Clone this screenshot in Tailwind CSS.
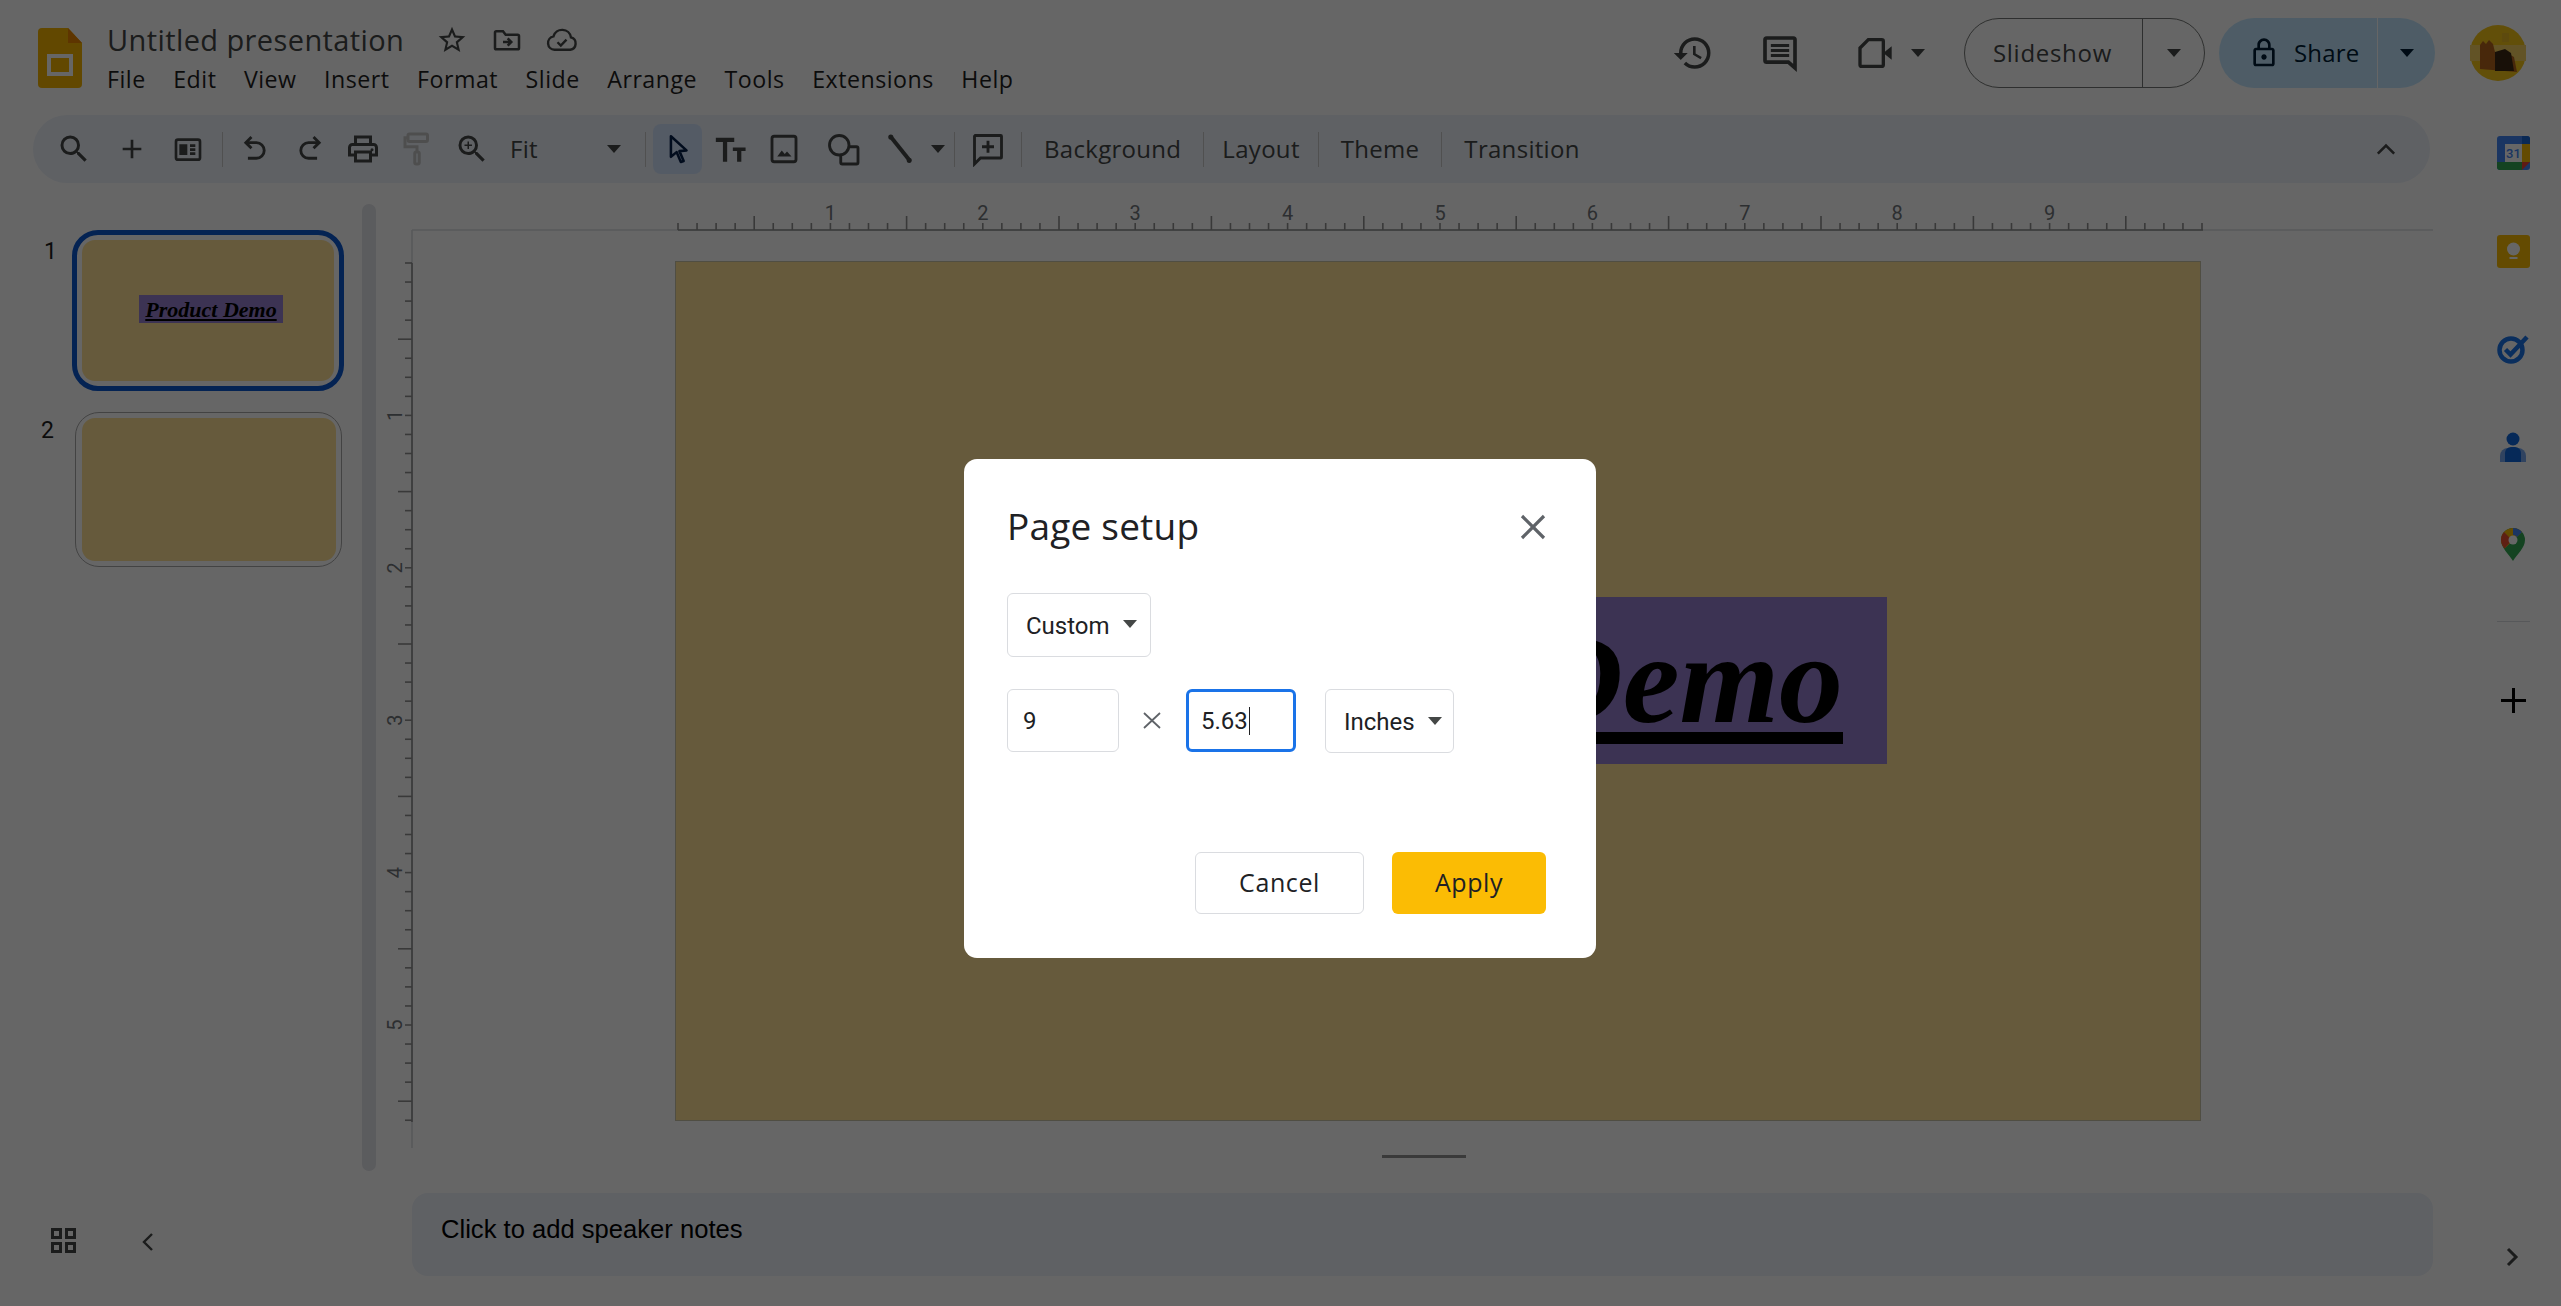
<!DOCTYPE html>
<html lang="en">
<head>
    <meta charset="UTF-8">
    <title>Untitled presentation - Page setup</title>
    <script src="https://cdn.jsdelivr.net/npm/@tailwindcss/browser@4"></script>
</head>
<body class="bg-white font-['Roboto',sans-serif]">
<div class="relative w-[2561px] h-[1306px] overflow-hidden flex flex-col bg-white">

    <!-- header -->
    <div class="h-[115px] flex items-start shrink-0">
        <svg class="ml-[38px] mt-[28px] w-[44px] h-[60px] shrink-0" viewBox="0 0 44 60">
            <path d="M4 0h26l14 15v41a4 4 0 0 1-4 4H4a4 4 0 0 1-4-4V4a4 4 0 0 1 4-4z" fill="#f4b400"/>
            <path d="M30 0l14 15H30z" fill="#ea8600"/>
            <path d="M9 26h26v22H9zM13 30v14h18V30z" fill="#fff" fill-rule="evenodd"/>
        </svg>
        <div class="ml-[25px] mt-[20px]">
            <div class="flex items-center h-[40px]">
                <span class="font-['Open_Sans',sans-serif] text-[29px] leading-[40px] text-[#444746] tracking-[0.4px] w-[329px]">Untitled presentation</span>
                <svg class="w-[32px] h-[32px]" viewBox="0 0 24 24" fill="#444746"><path d="M22 9.24l-7.19-.62L12 2 9.19 8.63 2 9.24l5.46 4.73L5.82 21 12 17.27 18.18 21l-1.63-7.03L22 9.24zM12 15.4l-3.76 2.27 1-4.28-3.32-2.88 4.38-.38L12 6.1l1.71 4.04 4.38.38-3.32 2.88 1 4.28L12 15.4z"/></svg>
                <svg class="ml-[23px] w-[32px] h-[32px]" viewBox="0 0 24 24" fill="none" stroke="#444746" stroke-width="1.9"><path d="M3 6.5a1 1 0 0 1 1-1h5l2 2.5h9a1 1 0 0 1 1 1V18a1 1 0 0 1-1 1H4a1 1 0 0 1-1-1z"/><path d="M9 13.5h6M12.5 10.8l2.7 2.7-2.7 2.7"/></svg>
                <svg class="ml-[21px] w-[36px] h-[36px]" viewBox="0 0 24 24" fill="none" stroke="#444746" stroke-width="1.6"><path d="M7 18.5a4.5 4.5 0 0 1-.7-8.9A6 6 0 0 1 18 10.3a4.2 4.2 0 0 1-.5 8.2z"/><path d="M9 13.5l2.2 2.2L15 11.8"/></svg>
            </div>
            <div class="flex gap-[27.5px] font-['Open_Sans',sans-serif] text-[23.2px] leading-[38px] text-[#1f1f1f] tracking-[0.5px]">
                <span>File</span><span>Edit</span><span>View</span><span>Insert</span><span>Format</span><span>Slide</span><span>Arrange</span><span>Tools</span><span>Extensions</span><span>Help</span>
            </div>
        </div>

        <div class="ml-auto mr-[35px] mt-[18px] flex items-center h-[70px]">
            <svg class="w-[42px] h-[42px]" viewBox="0 0 24 24" fill="#444746"><path d="M13 3a9 9 0 0 0-9 9H1l3.89 3.89.07.14L9 12H6c0-3.87 3.13-7 7-7s7 3.13 7 7-3.13 7-7 7c-1.93 0-3.68-.79-4.94-2.06l-1.42 1.42A8.954 8.954 0 0 0 13 21a9 9 0 0 0 0-18zm-1 5v5l4.28 2.54.72-1.21-3.5-2.08V8H12z"/></svg>
            <svg class="ml-[46px] w-[40px] h-[40px]" viewBox="0 0 24 24" fill="none" stroke="#444746"><path d="M4 3h16a1 1 0 0 1 1 1v17l-4-3.5H4a1 1 0 0 1-1-1V4a1 1 0 0 1 1-1z" stroke-width="2.2"/><path d="M6.5 7.5h11M6.5 10.5h11M6.5 13.5h11" stroke-width="1.8"/></svg>
            <svg class="ml-[55px] w-[40px] h-[40px]" viewBox="0 0 24 24" fill="none" stroke="#444746" stroke-width="2"><path d="M8 4h8a1 1 0 0 1 1 1v14a1 1 0 0 1-1 1H4a1 1 0 0 1-1-1V9z"/><path d="M17 12l5-4v8z" fill="#444746" stroke="none"/></svg>
            <svg class="ml-[16px] w-[14px] h-[8px]" viewBox="0 0 14 8"><path d="M0 0h14L7 8z" fill="#444746"/></svg>
            <div class="ml-[39px] w-[241px] h-[70px] rounded-full border-[1.6px] border-[#747775] flex items-center text-[#444746]">
                <span class="w-[177px] pl-[28px] text-[24px] font-['Open_Sans',sans-serif] tracking-[0.7px]">Slideshow</span>
                <div class="h-full border-l-[1.6px] border-[#747775] flex-1 flex items-center justify-center">
                    <svg class="w-[14px] h-[8px]" viewBox="0 0 14 8"><path d="M0 0h14L7 8z" fill="#444746"/></svg>
                </div>
            </div>
            <div class="ml-[14px] w-[216px] h-[70px] rounded-full bg-[#c2e7ff] flex items-center text-[#001d35]">
                <svg class="ml-[29px] w-[32px] h-[32px] shrink-0" viewBox="0 0 24 24" fill="#001d35"><path d="M18 8h-1V6c0-2.76-2.24-5-5-5S7 3.24 7 6v2H6c-1.1 0-2 .9-2 2v10c0 1.1.9 2 2 2h12c1.1 0 2-.9 2-2V10c0-1.1-.9-2-2-2zM9 6c0-1.66 1.34-3 3-3s3 1.34 3 3v2H9V6zm9 14H6V10h12v10zm-6-3c1.1 0 2-.9 2-2s-.9-2-2-2-2 .9-2 2 .9 2 2 2z"/></svg>
                <span class="ml-[14px] w-[83px] text-[24px] font-['Open_Sans',sans-serif] font-medium tracking-[0.2px]">Share</span>
                <div class="h-full border-l-[1.6px] border-white flex-1 flex items-center justify-center">
                    <svg class="w-[14px] h-[8px]" viewBox="0 0 14 8"><path d="M0 0h14L7 8z" fill="#001d35"/></svg>
                </div>
            </div>
            <svg class="ml-[35px] w-[56px] h-[56px]" viewBox="0 0 56 56">
                <circle cx="28" cy="28" r="28" fill="#f5c518"/>
                <path d="M0 20h56v16H0z" fill="#f4cf60"/>
                <path d="M10 44V20l3-4 3 3 3-4 4 4 2 8h6l8 2 5 3 3 15z" fill="#b5651d"/>
                <path d="M25 46V27l10-3 6 4 3 18z" fill="#3c2a14"/>
                <rect x="32" y="8" width="7" height="9" fill="#e8b923"/>
            </svg>
        </div>
    </div>

    <!-- toolbar and below -->
    <div class="flex-1 flex flex-col">
        <div class="ml-[33px] w-[2397px] h-[68px] rounded-full bg-[#edf2fa] flex items-center pl-[14px] shrink-0 text-[#444746]">
            <div class="w-[54px] flex justify-center"><svg class="w-[36px] h-[36px]" viewBox="0 0 24 24" fill="#444746"><path d="M15.5 14h-.79l-.28-.27A6.471 6.471 0 0 0 16 9.5 6.5 6.5 0 1 0 9.5 16c1.61 0 3.09-.59 4.23-1.57l.27.28v.79l5 4.99L20.49 19l-4.99-5zm-6 0C7.01 14 5 11.99 5 9.5S7.01 5 9.5 5 14 7.01 14 9.5 11.99 14 9.5 14z"/></svg></div>
            <div class="w-[62px] flex justify-center"><svg class="w-[32px] h-[32px]" viewBox="0 0 24 24" fill="#444746"><path d="M19 13h-6v6h-2v-6H5v-2h6V5h2v6h6v2z"/></svg></div>
            <div class="w-[50px] flex justify-center"><svg class="w-[32px] h-[32px]" viewBox="0 0 24 24" fill="none" stroke="#444746" stroke-width="2"><rect x="3" y="5" width="18" height="15" rx="1.5"/><path d="M6.5 9.500h4v6h-4z" fill="#444746"/><path d="M13.500 9.500h4M13.500 12.500h4M13.500 15.500h4"/></svg></div>
            <div class="ml-[9px] w-px h-[35px] bg-[#c7c7c7]"></div>
            <div class="w-[63px] flex justify-center"><svg class="w-[34px] h-[34px]" viewBox="0 0 24 24" fill="none" stroke="#444746" stroke-width="2"><path d="M9.5 3.5L5.5 7.5l4 4"/><path d="M5.5 7.5H13a5.5 5.5 0 0 1 0 11H7"/></svg></div>
            <div class="w-[47px] flex justify-center"><svg class="w-[34px] h-[34px]" viewBox="0 0 24 24" fill="none" stroke="#444746" stroke-width="2"><path d="M14.5 3.5l4 4-4 4"/><path d="M18.5 7.5H11a5.5 5.5 0 0 0 0 11h6"/></svg></div>
            <div class="w-[60px] flex justify-center"><svg class="w-[36px] h-[36px]" viewBox="0 0 24 24" fill="#444746"><path d="M19 8h-1V3H6v5H5c-1.66 0-3 1.34-3 3v6h4v4h12v-4h4v-6c0-1.66-1.34-3-3-3zM8 5h8v3H8V5zm8 12v2H8v-4h8v2zm2-2v-2H6v2H4v-4c0-.55.45-1 1-1h14c.55 0 1 .45 1 1v4h-2z"/><circle cx="18" cy="12.5" r="1"/></svg></div>
            <div class="w-[48px] flex justify-center"><svg class="w-[36px] h-[36px]" viewBox="0 0 24 24" fill="none" stroke="#c4c4c4" stroke-width="2"><rect x="6" y="2" width="13" height="5" rx="1"/><path d="M6 4.500H4v6h8v3"/><rect x="10.500" y="14" width="3" height="8" rx="1"/></svg></div>
            <div class="w-[62px] flex justify-center"><svg class="w-[36px] h-[36px]" viewBox="0 0 24 24" fill="#444746"><path d="M15.5 14h-.79l-.28-.27A6.471 6.471 0 0 0 16 9.5 6.5 6.5 0 1 0 9.5 16c1.61 0 3.09-.59 4.23-1.57l.27.28v.79l5 4.99L20.49 19l-4.99-5zm-6 0C7.01 14 5 11.99 5 9.5S7.01 5 9.5 5 14 7.01 14 9.5 11.99 14 9.5 14z"/><path d="M12 10h-2v2H9v-2H7V9h2V7h1v2h2z"/></svg></div>
            <span class="ml-[7px] w-[97px] text-[24px] font-['Open_Sans',sans-serif] tracking-[0.3px]">Fit</span>
            <svg class="w-[14px] h-[8px]" viewBox="0 0 14 8"><path d="M0 0h14L7 8z" fill="#444746"/></svg>
            <div class="ml-[24px] w-px h-[35px] bg-[#c7c7c7]"></div>
            <div class="ml-[7px] w-[49px] h-[50px] rounded-[8px] bg-[#d3e3fd] flex items-center justify-center"><svg class="w-[34px] h-[34px]" viewBox="0 0 24 24" fill="none" stroke="#041e49" stroke-width="1.8" stroke-linejoin="round"><path d="M7 3l11 10-5 .5 3 7-2 .7-3-7L7 17.5z"/></svg></div>
            <div class="ml-[4px] w-[48px] flex justify-center"><svg class="w-[34px] h-[34px]" viewBox="0 0 24 24" fill="#444746"><path d="M2 4h13v3h-5v14H7V7H2zM14 11h9v2.4h-3V21h-3v-7.6h-3z"/></svg></div>
            <div class="w-[60px] flex justify-center"><svg class="w-[36px] h-[36px]" viewBox="0 0 24 24" fill="none" stroke="#444746" stroke-width="1.9"><rect x="4" y="3.5" width="16" height="17" rx="1.5"/><path d="M7.5 17l3-4 2 2.4 1.5-1.8 3 3.4z" fill="#444746" stroke="none"/></svg></div>
            <div class="ml-[3px] w-[52px] flex justify-center"><svg class="w-[36px] h-[36px]" viewBox="0 0 24 24" fill="none" stroke="#444746" stroke-width="1.9"><circle cx="9.5" cy="9.5" r="6.5"/><path d="M16.5 10.5H21a1 1 0 0 1 1 1V21a1 1 0 0 1-1 1h-9.5a1 1 0 0 1-1-1v-4.5"/></svg></div>
            <div class="w-[62px] flex justify-center"><svg class="w-[34px] h-[34px]" viewBox="0 0 24 24" fill="#444746" stroke="#444746" stroke-width="2.800"><path d="M6 4l12 15"/><circle cx="5.500" cy="3.500" r="1.300" stroke-width="1"/><circle cx="18.500" cy="20" r="1.300" stroke-width="1"/></svg></div>
            <svg class="w-[14px] h-[8px]" viewBox="0 0 14 8"><path d="M0 0h14L7 8z" fill="#444746"/></svg>
            <div class="ml-[9px] w-px h-[35px] bg-[#c7c7c7]"></div>
            <div class="w-[66px] flex justify-center"><svg class="w-[36px] h-[36px]" viewBox="0 0 24 24" fill="none" stroke="#444746" stroke-width="1.9"><path d="M3.5 3h17a.5.5 0 0 1 .5.5v14a.5.5 0 0 1-.5.5H7l-4 4V3.500z"/><path d="M12 6.500v8M8 10.500h8"/></svg></div>
            <div class="w-px h-[35px] bg-[#c7c7c7]"></div>
            <div class="flex items-center font-['Open_Sans',sans-serif] text-[24px] tracking-[0.3px] text-[#444746]">
                <span class="ml-[22px]">Background</span>
                <div class="ml-[22px] w-px h-[35px] bg-[#c7c7c7]"></div>
                <span class="ml-[18px]">Layout</span>
                <div class="ml-[18px] w-px h-[35px] bg-[#c7c7c7]"></div>
                <span class="ml-[22px]">Theme</span>
                <div class="ml-[22px] w-px h-[35px] bg-[#c7c7c7]"></div>
                <span class="ml-[22px]">Transition</span>
            </div>
            <svg class="ml-auto mr-[30px] w-[28px] h-[28px]" viewBox="0 0 24 24" fill="none" stroke="#444746" stroke-width="2.200"><path d="M5 16l7-7 7 7"/></svg>
        </div>

        <div class="flex-1 flex">
            <!-- filmstrip -->
            <div class="w-[412px] shrink-0 flex flex-col">
                <div class="h-[988px] flex">
                    <div class="w-[362px] pt-[47px]">
                        <div class="flex">
                            <span class="w-[72px] pl-[44px] pt-[8px] text-[23px] leading-[28px] text-[#1f1f1f]">1</span>
                            <div class="w-[272px] h-[161px] rounded-[26px] border-[5px] border-[#0b57d0] p-[5px]">
                                <div class="h-full rounded-[13px] bg-[#ffe196] flex items-center justify-center">
                                    <div class="ml-[6px] -mt-[3px] w-[144px] h-[28px] bg-[#9680cf] flex items-center justify-center font-['Liberation_Serif',serif] font-bold italic text-[22px] text-black underline whitespace-nowrap">Product Demo</div>
                                </div>
                            </div>
                        </div>
                        <div class="flex mt-[21px]">
                            <span class="w-[75px] pl-[41px] pt-[5px] text-[23px] leading-[28px] text-[#1f1f1f]">2</span>
                            <div class="w-[267px] h-[155px] rounded-[24px] border-[1.6px] border-[#a8a8a8] px-[5.500px] py-[5px]">
                                <div class="h-full rounded-[13px] bg-[#ffe196]"></div>
                            </div>
                        </div>
                    </div>
                    <div class="w-[14px] mt-[21px] rounded-full bg-[#e3e5ea]"></div>
                </div>
                <div class="flex items-start pl-[51px] pt-[57px]">
                    <div class="grid grid-cols-2 gap-[3px] w-[25px]">
                        <div class="h-[11px] border-[3px] border-[#444746]"></div><div class="h-[11px] border-[3px] border-[#444746]"></div>
                        <div class="h-[11px] border-[3px] border-[#444746]"></div><div class="h-[11px] border-[3px] border-[#444746]"></div>
                    </div>
                    <svg class="ml-[65px] mt-[4px] w-[14px] h-[20px]" viewBox="0 0 14 20" fill="none" stroke="#444746" stroke-width="2.400"><path d="M11 2L3 10l8 8"/></svg>
                </div>
            </div>

            <!-- canvas and notes -->
            <div class="w-[2021px] shrink-0 flex flex-col">
                <div class="relative h-[1010px]">
                    <svg id="rulers" class="absolute inset-0 w-[2021px] h-[1010px] overflow-visible" viewBox="412 183 2021 1010"></svg>
                    <div class="absolute left-[263px] top-[78px] w-[1526px] h-[860px] bg-[#ffe196] border border-[#c9c2a8]">
                        <div class="absolute left-[343px] top-[335px] w-[868px] h-[167px] bg-[#9680cf] flex justify-end pr-[44px] overflow-hidden">
                            <span class="font-['Liberation_Serif',serif] font-bold italic text-[128px] leading-[164px] text-black underline decoration-[12px] underline-offset-[10px] whitespace-nowrap">Demo</span>
                        </div>
                    </div>
                    <div class="absolute left-[970px] top-[972px] w-[84px] h-[3px] bg-[#919191]"></div>
                </div>
                <div class="h-[83px] rounded-[16px] bg-[#edf2fa] px-[29px] pt-[21px] font-['Liberation_Sans',sans-serif] text-[25.600px] leading-[30px] text-black">Click to add speaker notes</div>
            </div>

            <!-- side panel -->
            <div class="flex-1 relative flex flex-col items-center pl-[32px]">
                <svg class="-mt-[47px] w-[33px] h-[34px]" viewBox="0 0 33 34">
                    <rect width="33" height="34" rx="3" fill="#4285f4"/>
                    <path d="M25 0h5a3 3 0 0 1 3 3v5h-8z" fill="#1967d2"/>
                    <path d="M25 8h8v18h-8z" fill="#fbbc04"/>
                    <path d="M0 26h25v8H3a3 3 0 0 1-3-3z" fill="#34a853"/>
                    <path d="M25 26h8l-8 8z" fill="#ea4335"/>
                    <rect x="8" y="8" width="17" height="18" fill="#fff"/>
                    <text x="16.500" y="22" text-anchor="middle" font-family="Roboto" font-size="13" font-weight="500" fill="#4285f4">31</text>
                </svg>
                <svg class="mt-[65px] w-[33px] h-[33px]" viewBox="0 0 33 33">
                    <rect width="33" height="33" rx="3" fill="#fbbc04"/>
                    <circle cx="16.500" cy="14" r="6.500" fill="#fff"/>
                    <rect x="12.500" y="22" width="8" height="2" fill="#fff"/>
                </svg>
                <svg class="mt-[66px] w-[32px] h-[30px]" viewBox="0 0 32 30" fill="none">
                    <circle cx="14" cy="16" r="11.500" stroke="#1a73e8" stroke-width="4.500"/>
                    <path d="M8.500 15.500l5 5L30 3" stroke="#1a73e8" stroke-width="4.500"/>
                </svg>
                <svg class="mt-[68px] w-[26px] h-[30px]" viewBox="0 0 26 30">
                    <circle cx="13" cy="7" r="6.500" fill="#0f67dc"/>
                    <path d="M0 30v-6a8 8 0 0 1 8-8h10a8 8 0 0 1 8 8v6z" fill="#79a9ef"/>
                    <path d="M5 30v-9a6 6 0 0 1 6-6h4a6 6 0 0 1 6 6v9z" fill="#0f67dc"/>
                </svg>
                <svg class="mt-[66px] w-[24px] h-[33px]" viewBox="0 0 24 33">
                    <path d="M12 33C8 26 0 20 0 12a12 12 0 0 1 24 0c0 8-8 14-12 21z" fill="#34a853"/>
                    <path d="M12 0a12 12 0 0 1 9 4L3.500 20.500C1.500 18 0 15 0 12A12 12 0 0 1 12 0z" fill="#fbbc04"/>
                    <path d="M3 4a12 12 0 0 0-3 8c0 3 1.500 6 3.500 8.500L11 12z" fill="#ea4335" opacity="0.9"/>
                    <path d="M12 0a12 12 0 0 1 9 4l-5 5a5 5 0 0 0-4-2z" fill="#4285f4"/>
                    <circle cx="12" cy="12" r="4.500" fill="#fff"/>
                </svg>
                <div class="mt-[60px] w-[33px] h-px bg-[#dadce0]"></div>
                <svg class="mt-[66px] w-[25px] h-[25px]" viewBox="0 0 25 25"><path d="M11 0h3v11h11v3H14v11h-3V14H0v-3h11z" fill="#000"/></svg>
                <svg class="absolute bottom-[39px] left-[72px] w-[14px] h-[20px]" viewBox="0 0 14 20" fill="none" stroke="#444746" stroke-width="3"><path d="M3 2l8 8-8 8"/></svg>
            </div>
        </div>
    </div>

    <!-- dim layer -->
    <div class="absolute inset-0 bg-black/60"></div>

    <!-- dialog -->
    <div class="absolute left-[964px] top-[459px] w-[632px] h-[499px] bg-white rounded-[13px] pl-[43px] pt-[46px] text-[#202124]">
        <div class="flex items-center justify-between h-[44px] pr-[50px]">
            <span class="-mt-[2px] font-['Open_Sans',sans-serif] text-[37px] leading-[44px] tracking-[0.2px]">Page setup</span>
            <svg class="w-[26px] h-[26px]" viewBox="0 0 26 26" fill="none" stroke="#5f6368" stroke-width="3.200"><path d="M2 2l22 22M24 2L2 24"/></svg>
        </div>
        <div class="mt-[44px] w-[144px] h-[64px] rounded-[6px] border-[1.6px] border-[#dadce0] flex items-center pl-[18px] pt-[2px] text-[24px]">
            <span class="w-[97px]">Custom</span>
            <svg class="w-[14px] h-[8px] -mt-[5px]" viewBox="0 0 14 8"><path d="M0 0h14L7 8z" fill="#444746"/></svg>
        </div>
        <div class="mt-[32px] flex items-start text-[24px]">
            <div class="w-[112px] h-[63px] rounded-[6px] border-[1.6px] border-[#dadce0] flex items-center pl-[15px]">9</div>
            <svg class="ml-[24px] mt-[23px] w-[18px] h-[17px]" viewBox="0 0 18 17" fill="none" stroke="#5f6368" stroke-width="1.800"><path d="M1 1l16 15M17 1L1 16"/></svg>
            <div class="ml-[25px] w-[110px] h-[63px] rounded-[6px] border-[3px] border-[#1a73e8] flex items-center pl-[12px]">5.63<span class="ml-px w-[1.500px] h-[28px] bg-[#202124]"></span></div>
            <div class="ml-[29px] w-[129px] h-[64px] rounded-[6px] border-[1.6px] border-[#dadce0] flex items-center pl-[18px] pt-[2px]">
                <span class="w-[84px]">Inches</span>
                <svg class="w-[14px] h-[8px] -mt-[2px]" viewBox="0 0 14 8"><path d="M0 0h14L7 8z" fill="#444746"/></svg>
            </div>
        </div>
        <div class="absolute left-[231px] top-[393px] flex gap-[28px] font-['Open_Sans',sans-serif] text-[25px] tracking-[0.6px] font-medium">
            <div class="w-[169px] h-[62px] rounded-[6px] border-[1.6px] border-[#dadce0] flex items-center justify-center">Cancel</div>
            <div class="w-[154px] h-[62px] rounded-[6px] bg-[#fbbc04] flex items-center justify-center">Apply</div>
        </div>
    </div>
</div>

<script>
    // rulers: 152.4px per inch, ticks every eighth
    const rulers = document.getElementById('rulers');
    const inch = 152.4;

    function line(x1, y1, x2, y2, color) {
        const el = document.createElementNS('http://www.w3.org/2000/svg', 'line');
        el.setAttribute('x1', x1); el.setAttribute('y1', y1);
        el.setAttribute('x2', x2); el.setAttribute('y2', y2);
        el.setAttribute('stroke', color);
        el.setAttribute('stroke-width', 1.6);
        rulers.appendChild(el);
    }

    function label(x, y, text, rotate) {
        const el = document.createElementNS('http://www.w3.org/2000/svg', 'text');
        el.setAttribute('x', x); el.setAttribute('y', y);
        el.setAttribute('text-anchor', 'middle');
        el.setAttribute('font-family', 'Roboto');
        el.setAttribute('font-size', 20);
        el.setAttribute('fill', '#70757a');
        if (rotate) el.setAttribute('transform', `rotate(-90 ${x} ${y})`);
        el.textContent = text;
        rulers.appendChild(el);
    }

    const dark = '#8f8f8f', light = '#dadce0';
    line(412, 230, 2433, 230, light);
    line(678, 230, 2203, 230, dark);
    line(412, 230, 412, 1148, light);
    line(412, 263, 412, 1122, dark);

    for (let i = 0; i <= 80; i++) {
        const x = 678 + i * inch / 8;
        const len = i % 4 === 0 && i % 8 !== 0 ? 14 : 7;
        line(x, 230, x, 230 - len, dark);
        if (i % 8 === 0 && i > 0 && i < 80) label(x, 220, i / 8);
    }
    for (let i = 0; i <= 45; i++) {
        const y = 263 + i * inch / 8;
        const len = i % 4 === 0 && i % 8 !== 0 ? 14 : 7;
        line(412, y, 412 - len, y, dark);
        if (i % 8 === 0 && i > 0) label(402, y, i / 8, true);
    }
</script>
</body>
</html>
